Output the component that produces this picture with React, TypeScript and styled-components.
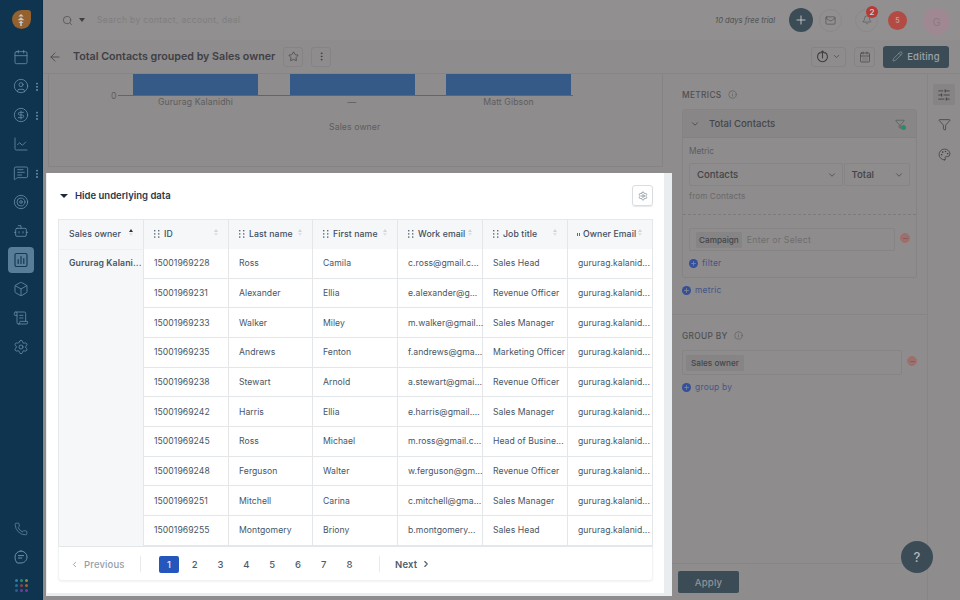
import React from "react";
import styled, { createGlobalStyle } from "styled-components";
import {
  ArrowLeft, Bell, Bot, Box, Calendar, CalendarDays, ChartLine, ChevronDown, ChevronLeft, ChevronRight,
  CircleDollarSign, CircleUser, EllipsisVertical, Filter, Funnel, Info, Mail, MessageSquareText, Palette, Pencil,
  Phone, Plus, ScrollText, Search, Settings, SlidersHorizontal, Star, Target, Minus,
} from "lucide-react";

const Global = createGlobalStyle`
  html, body { margin: 0; padding: 0; width: 960px; height: 600px; overflow: hidden; background: #8e8c8c; }
  * { box-sizing: border-box; }
  body { font-family: Inter, "Liberation Sans", sans-serif; -webkit-font-smoothing: antialiased; }
`;

const Page = styled.div`
  width: 960px; height: 600px; display: flex; overflow: hidden; position: relative;
`;
const Sidebar = styled.aside`
  width: 43px; flex: none; background: #0e3450; display: flex; flex-direction: column; align-items: center;
  padding-top: 10px; border-right: 1px solid #0b2c45;
`;
const Logo = styled.div`
  width: 19px; height: 19px; flex: none; background: #94612f; border-radius: 50% 3px 50% 50%; display: flex; align-items: center; justify-content: center;
  color: #c9c9c9; margin-bottom: 13.5px;
`;
const NavList = styled.nav`
  display: flex; flex-direction: column; align-items: center;
`;
const NavItem = styled.div<{ $active?: boolean }>`
  width: 26px; height: 29px; display: flex; align-items: center; justify-content: center; color: #6a90aa; position: relative;
  ${p => p.$active && `background:#577d99; border-radius:4px; height:26px; margin:1.5px 0; color:#123a57;`}
`;
const NavDots = styled.span`
  position: absolute; right: -4px; top: 10px; width: 2px; height: 9px;
  background: radial-gradient(circle, #5b819b 1px, transparent 1.2px) 0 0 / 2px 3.2px;
`;
const SideBottom = styled.div`
  margin-top: auto; display: flex; flex-direction: column; align-items: center; gap: 14px; padding-bottom: 8px; color: #6a90aa;
`;
const Dots = styled.div`
  display: grid; grid-template-columns: repeat(3, 3px); gap: 2px; margin-top: 1px;
`;
const Dot = styled.i<{ $c: string }>`
  width: 3px; height: 3px; border-radius: 50%; background: ${p => p.$c}; display: block;
`;

const Main = styled.div`
  flex: 1; min-width: 0; display: flex; flex-direction: column;
`;
const TopBar = styled.header`
  height: 40px; flex: none; background: #918f8f; display: flex; align-items: center; padding: 0 10px 0 19px; color: #4a4a4c;
`;
const Caret = styled.span`
  width: 0; height: 0; border: 3px solid transparent; border-top: 4px solid #3f3f42; border-bottom: 0; margin: 0 12px 0 6px;
`;
const SearchHint = styled.span`
  font-size: 8.5px; color: #7f7e7f; letter-spacing: .35px; flex: 1;
`;
const Trial = styled.span`
  font-size: 7.6px; font-style: italic; color: #4f4f50; margin-right: 14px;
`;
const PlusCircle = styled.div`
  width: 24px; height: 24px; border-radius: 50%; background: #3c4c56; color: #c8c8c8; display: flex; align-items: center; justify-content: center;
`;
const IconCircle = styled.div<{ $ml: number }>`
  width: 23px; height: 23px; border-radius: 50%; border: 1px solid #8a8888; display: flex; align-items: center; justify-content: center; color: #444; position: relative; margin-left: ${p => p.$ml}px;
`;
const BadgeDot = styled.span`
  position: absolute; top: -4px; right: -1px; width: 12px; height: 12px; border-radius: 50%; background: #b73a36; color: #cfcfcf; font-size: 8px; font-weight: 600;
  display: flex; align-items: center; justify-content: center;
`;
const RedCircle = styled.div`
  width: 19px; height: 19px; border-radius: 50%; background: #b34a43; color: #c9a09c; font-size: 7px; font-weight: 600; display: flex; align-items: center; justify-content: center; margin: 0 16px 0 10px;
`;
const Avatar = styled.div`
  width: 27px; height: 27px; border-radius: 50%; background: #a08892; color: #8e7a83; font-size: 11px; display: flex; align-items: center; justify-content: center; margin-top: 3px;
`;

const TitleBar = styled.div`
  height: 34px; flex: none; background: #8e8c8c; border-bottom: 1px solid #868484; display: flex; align-items: center; padding: 0 11px 0 5px; color: #454648;
`;
const Title = styled.h1`
  font-size: 10.7px; font-weight: 600; margin: 0 8px 0 11px; color: #3e4046; white-space: nowrap;
`;
const ToolBtn = styled.div<{ $w?: number }>`
  width: ${p => p.$w ?? 20}px; height: 20px; border: 1px solid #858383; border-radius: 3px; display: flex; align-items: center; justify-content: center; gap: 3px; margin-right: 8px; color: #3e3f42;
`;
const Spacer = styled.div`flex: 1;`;
const EditBtn = styled.div`
  width: 66px; height: 22px; border-radius: 3px; background: #3c4c56; color: #9fa3a7; font-size: 9.5px; font-weight: 500; display: flex; align-items: center; justify-content: center; gap: 4px; letter-spacing: .2px;
`;

const Body = styled.div`
  flex: 1; min-height: 0; display: flex;
`;
const LeftCol = styled.div`
  width: 629px; flex: none; display: flex; flex-direction: column; padding: 0 0 4px 3px;
`;
const ChartCard = styled.section`
  margin: 0 9px 6px 2px; height: 93px; flex: none; border: 1px solid #858383; border-top: 0; display: flex; flex-direction: column; padding-left: 67px; color: #5e5d5e; font-size: 8.7px;
`;
const Plot = styled.div`
  height: 22px; flex: none; display: flex; gap: 31.5px; border-bottom: 1px solid #656464; margin-left: 2px; padding-left: 15px; width: 455px; position: relative;
`;
const ZeroTick = styled.span`
  position: absolute; left: -7px; bottom: -6px;
`;
const Bar = styled.div`
  width: 125px; background: #365a87;
`;
const Labels = styled.div`
  display: flex; gap: 31.5px; padding-left: 17px;
`;
const BarLabel = styled.span`
  width: 125px; text-align: center; line-height: 13px; letter-spacing: .1px;
`;
const AxisTitle = styled.div`
  margin-top: 13px; padding-left: 213px; letter-spacing: .1px;
`;

const DataPanel = styled.section`
  flex: 1; min-height: 0; background: #fff; border-left: 1px solid #eaedf0; border-right: 8px solid #eaedf0; border-bottom: 3px solid #eaedf0; padding: 0 11px 0 11px; display: flex; flex-direction: column;
`;
const DataHead = styled.div`
  height: 45.5px; flex: none; display: flex; align-items: center; justify-content: space-between; padding: 0 0 0 2px;
`;
const HideLabel = styled.div`
  display: flex; align-items: center; gap: 7px; font-size: 9.5px; font-weight: 600; color: #27384d;
`;
const SmallCaret = styled.span`
  width: 0; height: 0; border: 4px solid transparent; border-top: 4.5px solid #1c2a3a; border-bottom: 0; margin-top: 1px;
`;
const GearBtn = styled.div`
  width: 21px; height: 21px; border: 1px solid #d8dde2; border-radius: 3px; display: flex; align-items: center; justify-content: center; color: #5d6b78; box-shadow: 0 1px 1px #e6e9ec;
`;
const Grid = styled.div`
  display: grid; grid-template-columns: 85px 85px 84px 85px 85px 85px 85px; grid-template-rows: 29.5px repeat(10, 29.68px);
  border: 1px solid #e6e9ec; border-bottom: 0; width: 595px; flex: none;
`;
const HeadCell = styled.div`
  background: #f5f7f9; border-right: 1px solid #e3e7ea; display: flex; align-items: center; padding: 0 0 0 9px; font-size: 8.7px; font-weight: 500; color: #3f4e5e; position: relative; white-space: nowrap; letter-spacing: .1px;
`;
const OwnerHead = styled(HeadCell)`
  padding-left: 10px;
`;
const Handle = styled.span<{ $tight?: boolean }>`
  color: #5d6a77; display: flex; margin-right: 3px; flex: none; width: ${p => (p.$tight ? 3 : 8)}px; justify-content: center;
`;
const Sort = styled.span<{ $on?: boolean }>`
  position: absolute; right: 10.5px; top: 9px; display: flex; flex-direction: column; gap: 1px;
  &::before { content: ""; border: 2.5px solid transparent; border-bottom: 3px solid ${p => (p.$on ? "#2a3644" : "#cfd5da")}; border-top: 0; }
  &::after { content: ""; border: 2.5px solid transparent; border-top: 3px solid #dfe3e7; border-bottom: 0; }
`;
const OwnerCell = styled.div`
  grid-row: 2 / span 10; background: #f5f7f9; border-right: 1px solid #e3e7ea; border-top: 1px solid #eef0f2; padding: 8px 0 0 10px; font-size: 8.7px; font-weight: 600; color: #475666; white-space: nowrap; letter-spacing: .1px;
`;
const Cell = styled.div`
  border-right: 1px solid #e3e7ea; border-bottom: 1px solid #e3e7ea; padding: 0 0 0 10px; font-size: 8.65px; color: #475666; display: flex; align-items: center; white-space: nowrap; letter-spacing: .05px;
`;
const FirstCell = styled(Cell)`
  grid-column: 2;
`;
const Pager = styled.nav`
  width: 595px; height: 35px; flex: none; border: 1px solid #f0f2f4; border-top: 1px solid #e3e7ea; border-radius: 0 0 4px 4px; display: flex; align-items: center; padding: 2px 0 0 11px; font-size: 9.5px; font-weight: 500; color: #4f5d6b;
  box-shadow: 0 1px 2px #f0f2f4;
`;
const PrevLink = styled.span`
  width: 70px; flex: none; display: flex; align-items: center; gap: 5px; color: #959fa9; letter-spacing: .15px; height: 18px;
`;
const Divider = styled.span`
  width: 1px; height: 16px; background: #e7eaed; flex: none;
`;
const Pages = styled.div`
  display: flex; width: 238px; padding-left: 18px; gap: 5.8px;
`;
const PageNum = styled.span<{ $on?: boolean }>`
  width: 20px; height: 17px; border-radius: 2px; display: flex; align-items: center; justify-content: center;
  ${p => p.$on ? "background:#2556bb;color:#dfe7f5;" : ""}
`;
const NextLink = styled.span`
  display: flex; align-items: center; gap: 4px; margin-left: 15px; letter-spacing: .2px; font-weight: 600;
`;

const RightPanel = styled.aside`
  width: 256px; flex: none; border-right: 1px solid #878585; display: flex; flex-direction: column; color: #4d4d50;
`;
const Section = styled.div`
  padding: 15px 10px 0; position: relative;
`;
const MetricsSection = styled(Section)`
  height: 241px; flex: none; border-bottom: 1px solid #878585;
`;
const GroupSection = styled(Section)`
  flex: 1;
`;
const SectionLabel = styled.div`
  display: flex; align-items: center; gap: 6px; font-size: 8.3px; font-weight: 500; color: #4f5054; letter-spacing: .35px; height: 11px;
`;
const MetricCard = styled.div`
  margin-top: 9px; height: 169px; border: 1px solid #858383; border-radius: 3px;
`;
const CardHead = styled.div`
  height: 28px; background: #888686; border-bottom: 1px solid #838181; display: flex; align-items: center; padding: 0 11px 0 7px; gap: 9px; font-size: 9.6px; font-weight: 500; color: #44464b;
`;
const StatusFilter = styled.span`
  margin-left: auto; color: #3f4e55; display: flex; position: relative;
  &::after { content:""; position:absolute; right:-1px; bottom:-1px; width:5px; height:5px; border-radius:50%; background:#2f8a69; }
`;
const CardBody = styled.div`
  padding: 8px 6px 0;
`;
const FieldLabel = styled.div`
  font-size: 8.3px; color: #5b5c62; line-height: 11px;
  margin-top: 0;
`;
const SelectRow = styled.div`
  display: flex; gap: 1px; margin-top: 6px;
`;
const SelectBox = styled.div<{ $w: number }>`
  width: ${p => p.$w}px; height: 23px; border: 1px solid #868484; border-radius: 2px; display: flex; align-items: center; justify-content: space-between; padding: 0 5px 0 7px; font-size: 9.6px; font-weight: 500; color: #424448;
`;
const Hint = styled.div`
  font-size: 8.2px; color: #6a696b; margin-top: 5px; line-height: 11px; letter-spacing: .1px;
`;
const Dashed = styled.div`
  border-top: 1px dashed #7d7b7b; margin: 12px -6px 0;
`;
const FilterRow = styled.div<{ $mt: number }>`
  display: flex; align-items: center; gap: 5px; margin-top: ${p => p.$mt}px;
`;
const FilterBox = styled.div<{ $w: number; $h: number; $pl: number }>`
  width: ${p => p.$w}px; height: ${p => p.$h}px; border: 1px solid #868484; border-radius: 2px; display: flex; align-items: center; padding-left: ${p => p.$pl}px; gap: 5px;
`;
const Chip = styled.span<{ $pad: number }>`
  height: 16px; background: #868484; border-radius: 2px; padding: 0 ${p => p.$pad}px; display: flex; align-items: center; font-size: 8.2px; font-weight: 500; color: #44464b;
`;
const Placeholder = styled.span`
  font-size: 8.8px; color: #6f6e70; letter-spacing: .2px;
`;
const RemoveIcon = styled.span`
  width: 10px; height: 10px; border-radius: 50%; background: #99716f; border: 1px solid #ab6a67; color: #7d4a48; display: flex; align-items: center; justify-content: center; flex: none; margin-top: -3px;
`;
const AddLink = styled.div`
  display: flex; align-items: center; gap: 4px; font-size: 8.4px; font-weight: 400; color: #44558a; letter-spacing: .25px; margin-top: 7px; line-height: 10px;
`;
const AddIcon = styled.span`
  width: 9px; height: 9px; border-radius: 50%; background: #34509a; color: #8e8c8c; display: flex; align-items: center; justify-content: center;
`;
const Footer = styled.div`
  height: 37px; flex: none; border-top: 1px solid #878585; padding: 7px 0 0 6px;
`;
const ApplyBtn = styled.div`
  width: 61px; height: 22px; border-radius: 2px; background: #3c4c56; color: #8f9498; font-size: 9.6px; font-weight: 500; display: flex; align-items: center; justify-content: center; letter-spacing: .2px;
`;
const Rail = styled.div`
  flex: 1; display: flex; flex-direction: column; align-items: center; padding-top: 10px; gap: 9px; color: #36363a;
`;
const RailBtn = styled.div<{ $on?: boolean }>`
  width: 22px; height: 21px; border-radius: 2px; display: flex; align-items: center; justify-content: center; ${p => p.$on && "background:#868484;"}
`;
const Help = styled.div`
  position: absolute; left: 901px; top: 541px; width: 32px; height: 32px; border-radius: 50%; background: #3c4c56; color: #b3b5b7; font-size: 13px; font-weight: 500; display: flex; align-items: center; justify-content: center;
`;

type IconProps = { size?: number; strokeWidth?: number };
const ReportIcon = ({ size = 16, strokeWidth = 1.3 }: IconProps) => (
  <svg width={size} height={size} viewBox="0 0 16 16" fill="none" stroke="currentColor" strokeWidth={strokeWidth} strokeLinecap="round">
    <rect x="2" y="1.5" width="12" height="13" rx="1.5" />
    <path d="M5.2 11.5V7.5M8 11.5V4.5M10.8 11.5V6.5" />
  </svg>
);
const ChatBlob = () => (
  <svg width="14" height="14" viewBox="0 0 14 14" fill="none" stroke="currentColor" strokeWidth="1" strokeLinecap="round" strokeLinejoin="round">
    <path d="M7 1a6 6 0 0 1 6 6c0 3.3-2.7 6-6 6H3.2C2 11.8 1 9.6 1 7a6 6 0 0 1 6-6z" />
    <path d="M4.4 5.6h5.2M4.4 8h3.4" />
  </svg>
);
const ExportIcon = () => (
  <svg width="13" height="13" viewBox="0 0 13 13" fill="none" stroke="currentColor" strokeWidth="1.1" strokeLinecap="round" strokeLinejoin="round">
    <path d="M4 2.4A5 5 0 1 0 9 2.4" />
    <path d="M6.5 8V1M4.7 2.8 6.5 1l1.8 1.8" />
  </svg>
);
const LogoMark = () => (
  <svg width="10" height="12" viewBox="0 0 10 12" fill="currentColor">
    <path d="M5 0 7.6 2.6H2.4zM5 3.2 8.4 6.2H1.6zM5 6.8 7.6 9H5.8V12H4.2V9H2.4z" />
  </svg>
);
const Grip = () => (
  <svg width="6" height="8" viewBox="0 0 6 8" fill="currentColor">
    <rect x="0" y="0" width="1.4" height="1.4" /><rect x="4" y="0" width="1.4" height="1.4" />
    <rect x="0" y="3.2" width="1.4" height="1.4" /><rect x="4" y="3.2" width="1.4" height="1.4" />
    <rect x="0" y="6.4" width="1.4" height="1.4" /><rect x="4" y="6.4" width="1.4" height="1.4" />
  </svg>
);
const TinyGrip = () => (
  <svg width="3" height="3" viewBox="0 0 3 3" fill="currentColor">
    <rect x="0" y="0" width="1" height="3" /><rect x="2" y="0" width="1" height="3" />
  </svg>
);

const nav: { I: React.ComponentType<IconProps>; more?: boolean; active?: boolean }[] = [
  { I: Calendar }, { I: CircleUser, more: true }, { I: CircleDollarSign, more: true }, { I: ChartLine },
  { I: MessageSquareText, more: true }, { I: Target }, { I: Bot }, { I: ReportIcon, active: true }, { I: Box }, { I: ScrollText }, { I: Settings },
];
const dotColors = ["#2a7fa8","#2f8a6a","#9a8a2a","#2a6f9a","#a23a3a","#a2662a","#2a5c9a","#6a3f9a","#7a3a9a"];
const cols = ["ID","Last name","First name","Work email","Job title","Owner Email"];
const rows = [
  ["15001969228","Ross","Camila","c.ross@gmail.c...","Sales Head"],
  ["15001969231","Alexander","Ellia","e.alexander@g...","Revenue Officer"],
  ["15001969233","Walker","Miley","m.walker@gmail...","Sales Manager"],
  ["15001969235","Andrews","Fenton","f.andrews@gma...","Marketing Officer"],
  ["15001969238","Stewart","Arnold","a.stewart@gmai...","Revenue Officer"],
  ["15001969242","Harris","Ellia","e.harris@gmail....","Sales Manager"],
  ["15001969245","Ross","Michael","m.ross@gmail.c...","Head of Busine..."],
  ["15001969248","Ferguson","Walter","w.ferguson@gm...","Revenue Officer"],
  ["15001969251","Mitchell","Carina","c.mitchell@gma...","Sales Manager"],
  ["15001969255","Montgomery","Briony","b.montgomery...","Sales Head"],
];

export default function App() {
  return (
    <Page>
      <Global />
      <Sidebar>
        <Logo><LogoMark /></Logo>
        <NavList>
          {nav.map(({ I, more, active }, i) => (
            <NavItem key={i} $active={active}>
              <I size={16} strokeWidth={1.2} />
              {more && <NavDots />}
            </NavItem>
          ))}
        </NavList>
        <SideBottom>
          <Phone size={14} strokeWidth={1.2} />
          <ChatBlob />
          <Dots>{dotColors.map(c => <Dot key={c} $c={c} />)}</Dots>
        </SideBottom>
      </Sidebar>
      <Main>
        <TopBar>
          <Search size={11} strokeWidth={1.5} />
          <Caret />
          <SearchHint>Search by contact, account, deal</SearchHint>
          <Trial>10 days free trial</Trial>
          <PlusCircle><Plus size={14} strokeWidth={1.6} /></PlusCircle>
          <IconCircle $ml={6}><Mail size={11} strokeWidth={1.2} /></IconCircle>
          <IconCircle $ml={13}><Bell size={10} strokeWidth={1.2} /><BadgeDot>2</BadgeDot></IconCircle>
          <RedCircle>5</RedCircle>
          <Avatar>G</Avatar>
        </TopBar>
        <TitleBar>
          <ArrowLeft size={14} strokeWidth={1.4} />
          <Title>Total Contacts grouped by Sales owner</Title>
          <ToolBtn><Star size={11} strokeWidth={1.5} /></ToolBtn>
          <ToolBtn><EllipsisVertical size={11} strokeWidth={1.8} /></ToolBtn>
          <Spacer />
          <ToolBtn $w={35}><ExportIcon /><ChevronDown size={9} strokeWidth={1.8} /></ToolBtn>
          <ToolBtn $w={21}><CalendarDays size={12} strokeWidth={1.3} /></ToolBtn>
          <EditBtn><Pencil size={11} strokeWidth={1.3} />Editing</EditBtn>
        </TitleBar>
        <Body>
          <LeftCol>
            <ChartCard>
              <Plot>
                <ZeroTick>0</ZeroTick>
                <Bar /><Bar /><Bar />
              </Plot>
              <Labels>
                <BarLabel>Gururag Kalanidhi</BarLabel>
                <BarLabel>—</BarLabel>
                <BarLabel>Matt Gibson</BarLabel>
              </Labels>
              <AxisTitle>Sales owner</AxisTitle>
            </ChartCard>
            <DataPanel>
              <DataHead>
                <HideLabel><SmallCaret />Hide underlying data</HideLabel>
                <GearBtn><Settings size={10} strokeWidth={1.4} /></GearBtn>
              </DataHead>
              <Grid>
                <OwnerHead>Sales owner<Sort $on /></OwnerHead>
                {cols.map((c, i) => (
                  <HeadCell key={c}>
                    <Handle $tight={i === 5}>{i === 5 ? <TinyGrip /> : <Grip />}</Handle>
                    {c}<Sort />
                  </HeadCell>
                ))}
                <OwnerCell>Gururag Kalani...</OwnerCell>
                {rows.map((r, i) => (
                  <React.Fragment key={i}>
                    <FirstCell>{r[0]}</FirstCell>
                    <Cell>{r[1]}</Cell>
                    <Cell>{r[2]}</Cell>
                    <Cell>{r[3]}</Cell>
                    <Cell>{r[4]}</Cell>
                    <Cell>gururag.kalanid...</Cell>
                  </React.Fragment>
                ))}
              </Grid>
              <Pager>
                <PrevLink><ChevronLeft size={9} strokeWidth={2.4} />Previous</PrevLink>
                <Divider />
                <Pages>
                  {[1,2,3,4,5,6,7,8].map(n => <PageNum key={n} $on={n === 1}>{n}</PageNum>)}
                </Pages>
                <Divider />
                <NextLink>Next<ChevronRight size={10} strokeWidth={2.6} /></NextLink>
              </Pager>
            </DataPanel>
          </LeftCol>
          <RightPanel>
            <MetricsSection>
              <SectionLabel>METRICS<Info size={9} strokeWidth={1.3} /></SectionLabel>
              <MetricCard>
                <CardHead>
                  <ChevronDown size={10} strokeWidth={2} />Total Contacts
                  <StatusFilter><Funnel size={10} strokeWidth={1.3} /></StatusFilter>
                </CardHead>
                <CardBody>
                  <FieldLabel>Metric</FieldLabel>
                  <SelectRow>
                    <SelectBox $w={155}>Contacts<ChevronDown size={10} strokeWidth={1.8} /></SelectBox>
                    <SelectBox $w={67}>Total<ChevronDown size={10} strokeWidth={1.8} /></SelectBox>
                  </SelectRow>
                  <Hint>from Contacts</Hint>
                  <Dashed />
                  <FilterRow $mt={13}>
                    <FilterBox $w={207} $h={23} $pl={6}><Chip $pad={3}>Campaign</Chip><Placeholder>Enter or Select</Placeholder></FilterBox>
                    <RemoveIcon><Minus size={7} strokeWidth={2} /></RemoveIcon>
                  </FilterRow>
                  <AddLink><AddIcon><Plus size={7} strokeWidth={2.5} /></AddIcon>filter</AddLink>
                </CardBody>
              </MetricCard>
              <AddLink><AddIcon><Plus size={7} strokeWidth={2.5} /></AddIcon>metric</AddLink>
            </MetricsSection>
            <GroupSection>
              <SectionLabel>GROUP BY<Info size={9} strokeWidth={1.3} /></SectionLabel>
              <FilterRow $mt={9}>
                <FilterBox $w={222} $h={25} $pl={3}><Chip $pad={5}>Sales owner</Chip></FilterBox>
                <RemoveIcon><Minus size={7} strokeWidth={2} /></RemoveIcon>
              </FilterRow>
              <AddLink><AddIcon><Plus size={7} strokeWidth={2.5} /></AddIcon>group by</AddLink>
            </GroupSection>
            <Footer><ApplyBtn>Apply</ApplyBtn></Footer>
          </RightPanel>
          <Rail>
            <RailBtn $on><SlidersHorizontal size={14} strokeWidth={1.3} /></RailBtn>
            <RailBtn><Filter size={13} strokeWidth={1.3} /></RailBtn>
            <RailBtn><Palette size={13} strokeWidth={1.3} /></RailBtn>
          </Rail>
        </Body>
      </Main>
      <Help>?</Help>
    </Page>
  );
}
